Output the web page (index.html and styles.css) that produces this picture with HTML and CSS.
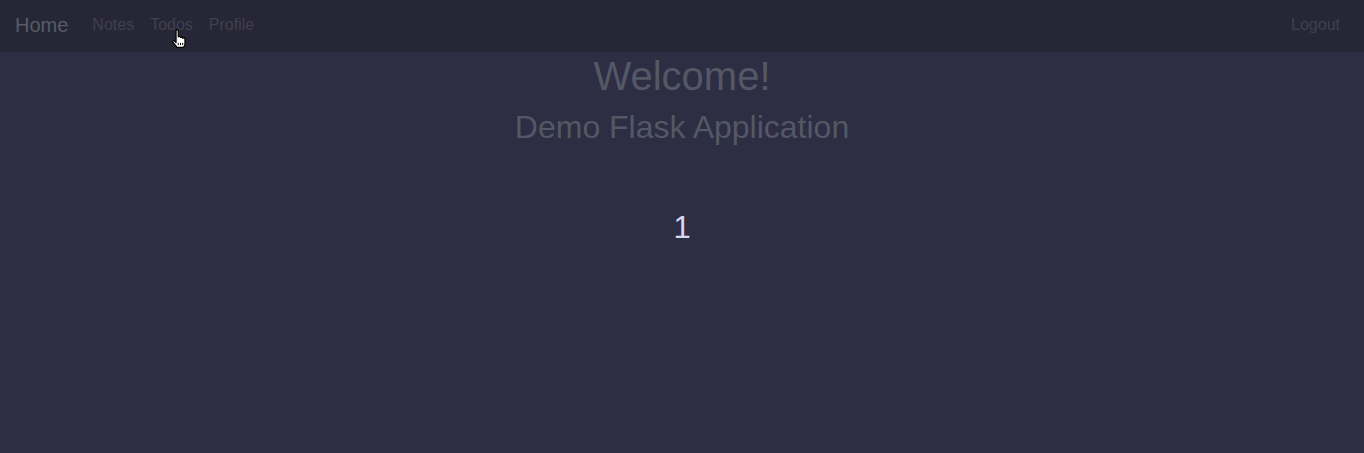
FILE: index.html
```html
<!DOCTYPE html>
<html>
<head>
<meta charset="utf-8">
<link rel="stylesheet" href="styles.css">
</head>
<body>
<nav class="navbar">
  <div class="nav-left">
    <a class="brand" href="#">Home</a>
    <a class="nav-link" href="#">Notes</a>
    <a class="nav-link" href="#">Todos</a>
    <a class="nav-link" href="#">Profile</a>
  </div>
  <a class="nav-link" href="#">Logout</a>
</nav>
<main class="content">
  <h1 class="title">Welcome!</h1>
  <h2 class="subtitle">Demo Flask Application</h2>
  <div class="counter">1</div>
</main>
<svg class="cursor" width="19" height="20" viewBox="0 0 17 18">
  <path d="M4.5 1.2 Q5.5 0.4 6.5 1.2 V7 Q7.5 6.2 8.5 7 V7.6 Q9.5 6.8 10.5 7.6 V8.4 Q11.5 7.6 12.5 8.4 V13.5 Q12.5 15.5 11 16.5 H5.5 L1.6 11.8 Q1.2 10.4 2.8 10.6 L4.5 12.2 Z" fill="#fff" stroke="#000" stroke-width="1.1" stroke-linejoin="round"/>
  <path d="M6.5 12.5 V14.5 M8.5 12.5 V14.5 M10.5 12.5 V14.5" stroke="#000" stroke-width="0.9"/>
</svg>
</body>
</html>
```
FILE: styles.css
```css
html, body {
  margin: 0;
  padding: 0;
}
body {
  background: #2d2d44;
  font-family: "Liberation Sans", Arial, sans-serif;
  height: 453px;
  overflow: hidden;
  position: relative;
}
a { text-decoration: none; }
.navbar {
  height: 52px;
  box-sizing: border-box;
  background: #262636;
  display: flex;
  align-items: center;
  justify-content: space-between;
  padding: 0 16px 2px 15px;
}
.nav-left {
  display: flex;
  align-items: center;
}
.brand {
  font-size: 20px;
  color: #595b68;
  margin-right: 16px;
}
.nav-link {
  font-size: 16px;
  color: #40404f;
  padding: 0 8px;
}
.content {
  text-align: center;
}
.title {
  font-size: 40px;
  font-weight: 400;
  line-height: 1.2;
  color: #545864;
  margin: 0 0 8px;
}
.subtitle {
  font-size: 32px;
  font-weight: 400;
  line-height: 1.2;
  color: #545864;
  margin: 0;
}
.counter {
  font-size: 31px;
  line-height: 1.2;
  color: #d4d8f0;
  margin-top: 63px;
}
.cursor {
  position: absolute;
  left: 171px;
  top: 29px;
}
```
